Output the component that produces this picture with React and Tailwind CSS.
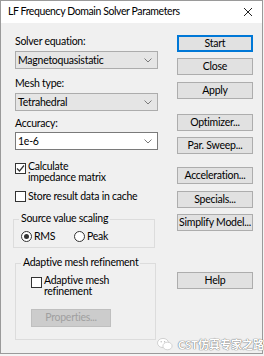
import React from 'react';

const font = { fontFamily: 'Lato, "Noto Sans CJK SC", sans-serif' };

function Combo({ value, white }) {
    return (
        <div
            className={`flex items-center justify-between h-[18px] px-[2px] border ${
                white ? 'bg-white border-[#7a7a7a]' : 'bg-[#e5e5e5] border-[#acacac]'
            }`}
        >
            <span className="text-[10.5px] leading-none text-black">{value}</span>
            <svg width="8" height="5" viewBox="0 0 8 5" className="mr-[3px]">
                <path d="M0.5 0.5 L4 4 L7.5 0.5" fill="none" stroke="#7a7a7a" strokeWidth="1" />
            </svg>
        </div>
    );
}

function Btn({ children, focus, className = '' }) {
    return (
        <div
            className={`flex items-center justify-center h-[17px] bg-[#e1e1e1] text-[10.5px] leading-none text-black whitespace-nowrap ${
                focus ? 'border-2 border-[#0078d7]' : 'border border-[#adadad]'
            } ${className}`}
        >
            {children}
        </div>
    );
}

function Check({ checked }) {
    return (
        <div className="w-[11px] h-[11px] border border-[#333] bg-white flex items-center justify-center shrink-0">
            {checked && (
                <svg width="9" height="9" viewBox="0 0 9 9">
                    <path d="M1 4.5 L3.5 7 L8 1.5" fill="none" stroke="#333" strokeWidth="1.2" />
                </svg>
            )}
        </div>
    );
}

function Radio({ checked }) {
    return (
        <div className="w-[11px] h-[11px] rounded-full border border-[#333] bg-white flex items-center justify-center shrink-0">
            {checked && <div className="w-[5px] h-[5px] rounded-full bg-[#333]" />}
        </div>
    );
}

export default function App() {
    return (
        <div className="w-[264px] h-[356px] bg-[#f4f4f4] relative overflow-hidden tracking-[-0.25px]" style={font}>
            <div className="w-[263px] h-[354px] border border-[#9a9a9a] bg-[#f0f0f0] flex flex-col">
                {/* Title bar */}
                <div className="h-[22px] bg-white flex items-center justify-between pl-[7px] pr-[9px]">
                    <span className="text-[10.5px] text-black tracking-[-0.4px]">LF Frequency Domain Solver Parameters</span>
                    <svg width="10" height="10" viewBox="0 0 10 10">
                        <path d="M1 1 L9 9 M9 1 L1 9" stroke="#222" strokeWidth="1" />
                    </svg>
                </div>

                <div className="flex flex-1 pl-[14px]">
                    {/* Left column */}
                    <div className="w-[143px] flex flex-col text-[10.5px] text-black">
                        <div className="mt-[12px] h-[13px] leading-[13px]">Solver equation:</div>
                        <div className="mt-[3px]"><Combo value="Magnetoquasistatic" /></div>
                        <div className="mt-[8px] h-[13px] leading-[13px]">Mesh type:</div>
                        <div className="mt-[3px]"><Combo value="Tetrahedral" /></div>
                        <div className="mt-[6px] h-[13px] leading-[13px]">Accuracy:</div>
                        <div className="mt-[2px]"><Combo value="1e-6" white /></div>

                        <div className="mt-[13px] flex items-start gap-[2px]">
                            <Check checked />
                            <div className="leading-[11px] -mt-[2px]">
                                Calculate
                                <br />
                                impedance matrix
                            </div>
                        </div>
                        <div className="mt-[8px] flex items-center gap-[2px]">
                            <Check />
                            <span className="leading-[11px]">Store result data in cache</span>
                        </div>

                        <div className="mt-[17px] -ml-[2px] w-[142px] h-[29px] border border-[#dcdcdc] relative flex items-start pt-[11px] pl-[7px]">
                            <span className="absolute -top-[8px] left-[5px] px-[2px] bg-[#f0f0f0] leading-[13px]">Source value scaling</span>
                            <Radio checked />
                            <span className="ml-[2px] w-[40px] leading-[11px]">RMS</span>
                            <Radio />
                            <span className="ml-[2px] leading-[11px]">Peak</span>
                        </div>

                        <div className="mt-[15px] w-[141px] h-[77px] border border-[#dcdcdc] relative flex flex-col pl-[15px]">
                            <span className="absolute -top-[8px] left-[5px] px-[2px] bg-[#f0f0f0] leading-[13px]">Adaptive mesh refinement</span>
                            <div className="mt-[13px] flex items-start gap-[2px]">
                                <Check />
                                <div className="leading-[11px] -mt-[2px]">
                                    Adaptive mesh
                                    <br />
                                    refinement
                                </div>
                            </div>
                            <div className="mt-[12px] w-[80px] h-[18px] bg-[#cccccc] border border-[#bfbfbf] flex items-center justify-center text-[#a0a0a0]">
                                Properties...
                            </div>
                        </div>
                    </div>

                    {/* Right column */}
                    <div className="ml-[19px] w-[76px] flex flex-col pt-[12px]">
                        <Btn focus>Start</Btn>
                        <Btn className="mt-[6px]">Close</Btn>
                        <Btn className="mt-[7px]">Apply</Btn>
                        <Btn className="mt-[15px]">Optimizer...</Btn>
                        <Btn className="mt-[6px]">Par. Sweep...</Btn>
                        <Btn className="mt-[13px]">Acceleration...</Btn>
                        <Btn className="mt-[7px]">Specials...</Btn>
                        <Btn className="mt-[6px]">Simplify Model...</Btn>
                        <Btn className="mt-[41px]">Help</Btn>
                    </div>
                </div>
            </div>

            {/* Watermark */}
            <div className="absolute left-[157px] top-[337px] flex items-center gap-[5px]">
                <svg width="16" height="14" viewBox="0 0 16 14">
                    <ellipse cx="6" cy="6" rx="5.5" ry="4.6" fill="#fff" stroke="#c8c8c8" strokeWidth="0.8" />
                    <ellipse cx="10.5" cy="9" rx="4.6" ry="3.8" fill="#fff" stroke="#c8c8c8" strokeWidth="0.8" />
                    <circle cx="4.2" cy="4.8" r="0.7" fill="#bbb" />
                    <circle cx="7.6" cy="4.8" r="0.7" fill="#bbb" />
                </svg>
                <span
                    className="text-[11px] text-white leading-none tracking-normal font-bold"
                    style={{ textShadow: '0 0 1px #666, 0 0 1px #666' }}
                >
                    CST仿真专家之路
                </span>
            </div>
        </div>
    );
}
